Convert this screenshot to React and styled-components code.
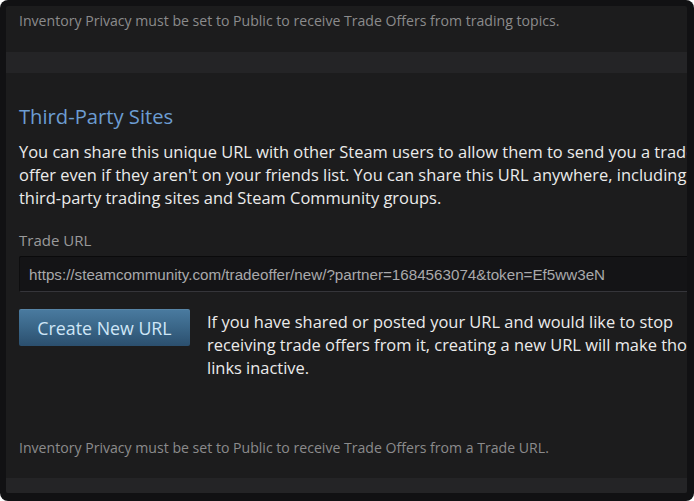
import React from "react";
import styled, { createGlobalStyle } from "styled-components";

const Global = createGlobalStyle`
  html, body { margin: 0; padding: 0; background: #ffffff; }
  #root { width: 694px; height: 501px; }
  * { box-sizing: border-box; }
`;

const Frame = styled.div`
  width: 694px;
  height: 501px;
  background: #111113;
  border-radius: 8px;
  padding: 6px 7px 8px 6px;
  overflow: hidden;
`;

const Panel = styled.div`
  height: 100%;
  background: #1c1c1d;
  border-radius: 2px;
  overflow: hidden;
  display: flex;
  flex-direction: column;
  font-family: "Open Sans", "Noto Sans", sans-serif;
  white-space: nowrap;
`;

const Section = styled.div`
  padding: ${(p) => p.$pad || "0 0 0 13px"};
  display: flex;
  flex-direction: column;
  flex: ${(p) => (p.$grow ? 1 : "none")};
`;

const Strip = styled.div`
  height: ${(p) => p.$h}px;
  background: #242426;
  flex: none;
`;

const Note = styled.div`
  font-size: 14.1px;
  line-height: 18px;
  color: #8b8b8c;
  margin-top: ${(p) => (p.$bottom ? "auto" : "0")};
  margin-bottom: ${(p) => (p.$bottom ? "21px" : "0")};
`;

const Heading = styled.h2`
  margin: 0;
  font-size: 20.2px;
  line-height: 24px;
  font-weight: 400;
  color: #6c9dd2;
`;

const Para = styled.div`
  margin-top: ${(p) => p.$mt || 0}px;
  font-size: 16.45px;
  line-height: 23px;
  color: #ebebeb;
`;

const Label = styled.div`
  margin-top: 22px;
  font-size: 15px;
  line-height: 18px;
  color: #9a9a9b;
`;

const UrlInput = styled.div`
  margin-top: 7px;
  height: 36px;
  background: #141416;
  border-top: 1px solid #0a0a0b;
  border-left: 1px solid #0e0e0f;
  border-bottom: 1px solid #35353a;
  border-radius: 2px 0 0 2px;
  display: flex;
  align-items: center;
  padding-left: 9px;
  font-family: "Liberation Sans", Arial, sans-serif;
  font-size: 15.2px;
  color: #a9a9ab;
  margin-right: -40px;
`;

const Row = styled.div`
  margin-top: 17px;
  display: flex;
  align-items: flex-start;
  gap: 17px;
`;

const Button = styled.button`
  flex: none;
  width: 171px;
  height: 37px;
  border: none;
  border-radius: 2px;
  background: linear-gradient(to bottom, #4a7ba0 0%, #3a6688 50%, #2b4f6e 100%);
  box-shadow: inset 0 1px 0 rgba(255,255,255,0.08);
  color: #cfe6f7;
  font-family: "Open Sans", "Noto Sans", sans-serif;
  font-size: 17.8px;
  padding: 0;
  cursor: pointer;
`;

const SideText = styled(Para)`
  padding-top: 1px;
`;

export default function App() {
  return (
    <>
      <Global />
      <Frame>
        <Panel>
          <Section $pad="6px 0 22px 13px">
            <Note>Inventory Privacy must be set to Public to receive Trade Offers from trading topics.</Note>
          </Section>
          <Strip $h={21} />
          <Section $pad="31px 0 0 13px" $grow>
            <Heading>Third-Party Sites</Heading>
            <Para $mt={12}>
              You can share this unique URL with other Steam users to allow them to send you a trade
              <br />
              offer even if they aren't on your friends list. You can share this URL anywhere, including
              <br />
              third-party trading sites and Steam Community groups.
            </Para>
            <Label>Trade URL</Label>
            <UrlInput>https://steamcommunity.com/tradeoffer/new/?partner=1684563074&amp;token=Ef5ww3eN</UrlInput>
            <Row>
              <Button>Create New URL</Button>
              <SideText>
                If you have shared or posted your URL and would like to stop
                <br />
                receiving trade offers from it, creating a new URL will make those
                <br />
                links inactive.
              </SideText>
            </Row>
            <Note $bottom>
              Inventory Privacy must be set to Public to receive Trade Offers from a Trade URL.
            </Note>
          </Section>
          <Strip $h={15} />
        </Panel>
      </Frame>
    </>
  );
}
